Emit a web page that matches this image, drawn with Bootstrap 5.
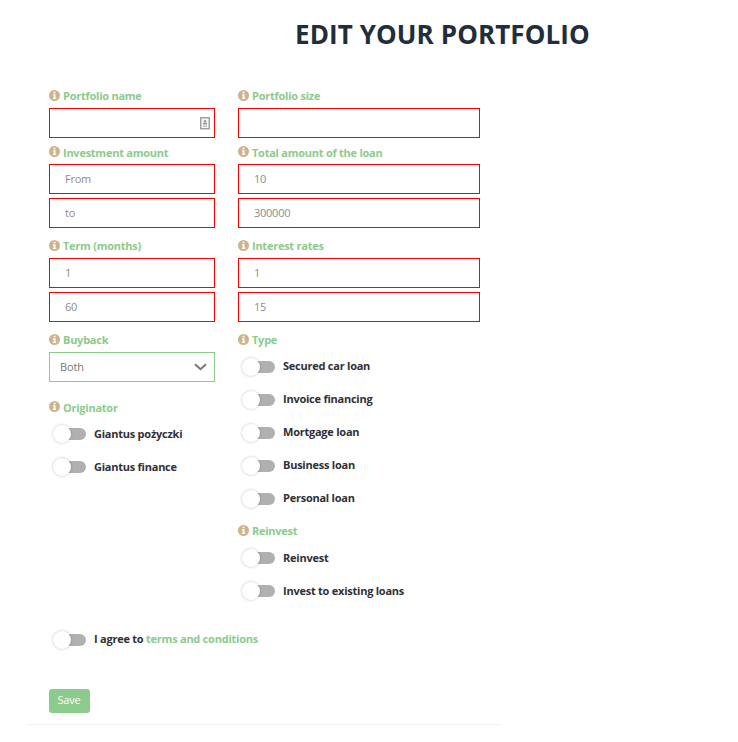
<!DOCTYPE html>
<html lang="en">
<head>
<meta charset="utf-8">
<title>Edit your portfolio</title>
<meta name="viewport" content="width=device-width, initial-scale=1">
<link rel="stylesheet" href="https://cdn.jsdelivr.net/npm/bootstrap@5.3.0/dist/css/bootstrap.min.css">
<style>
body{font-family:"Open Sans",sans-serif;font-size:11px;line-height:16px;color:#2f2f35;background:#fff;overflow:hidden}
.page-title{font-size:26px;line-height:36px;font-weight:700;letter-spacing:.1px;color:#212d3b;padding:16px 0 0 295px;height:82px}
.panel{width:476px;height:643px;margin-left:26px;padding:0 22px 0 23px;border-bottom:1px solid #f0f0f0;border-radius:3px}
.col-a{width:166px}
.col-b{width:242px}
.form-cols{gap:23px;height:541px}
.panel-inner{width:431px}
.tag{color:#8bcb8b;font-weight:700;letter-spacing:-.25px;height:30px;padding-bottom:4px}
.tag svg{width:11px;height:11px;margin:0 3px 3px 0;flex:none}
.tag-first{height:26px}
.tag-tight{height:26px;padding-bottom:3px}
.tag-tight svg{margin-bottom:4px}
.tag-type{height:28px;padding-bottom:2px;margin-bottom:0}
.tag-orig{height:35px;padding-bottom:1px}
.tag-orig svg{margin-bottom:4px}
.tag-reinv{height:26px;padding-bottom:2px}
.field{height:30px;border:1px solid #f00;border-radius:0;font-size:11px;line-height:16px;padding:5px 15px 7px;color:#8c8c8c;letter-spacing:-.25px}
.field::placeholder{color:#8c8c8c;opacity:1}
.field + .field{margin-top:4px}
.field-icon{right:5px;top:9px;width:10px;height:13px}
.picker{height:30px;border:1px solid #8bcb8b;padding:0 7px 0 10px;color:#777;letter-spacing:-.1px}
.switch-row{height:33px;font-weight:700;padding-left:3px;letter-spacing:-.24px}
.track{width:30px;height:12px;margin:1px 8px 0 4px;border-radius:0 6px 6px 0;background:#b0b0b0;flex:none}
.knob{width:18px;height:18px;margin:-3px 0 0 -3px;border-radius:50%;background:#fff;box-shadow:0 0 3px rgba(0,0,0,.25)}
.switch-text{padding-bottom:1px}
.low .switch-text{padding:1px 0 0}
.terms{color:#8bcb8b}
.save{width:41px;height:24px;margin-top:33px;background:#8bcb8b;color:#fff;font-size:11px;line-height:16px;border:0;border-radius:3px;padding:3px 1px 5px 0;letter-spacing:-.2px}
</style>
</head>
<body>
<svg class="d-none"><symbol id="info" viewBox="0 0 11 11"><circle cx="5.5" cy="5.5" r="5.5" fill="#ceb38c"/><path d="M4.6 1.7h1.9v1.6H4.6zM4 4.3h2.5v3.4h.7v1.2H3.9V7.7h.8V5.5H4z" fill="#fff"/></symbol></svg>
<h1 class="page-title m-0">EDIT YOUR PORTFOLIO</h1>
<main class="panel">
<form class="panel-inner">
<div class="form-cols d-flex">
<section class="col-a">
<div class="tag tag-first d-flex align-items-end"><svg><use href="#info"/></svg>Portfolio name</div>
<div class="position-relative"><input class="form-control field" aria-label="Portfolio name">
<svg class="field-icon position-absolute" viewBox="0 0 10 13"><rect x=".75" y=".75" width="8.5" height="11" fill="#f5f5f5" stroke="#969696" stroke-width="1.3"/><circle cx="5" cy="4.2" r="1.2" fill="#999"/><path d="M3 7.5V6.3q2-1.4 4 0v1.2z" fill="#999"/><path d="M3 9.2h4" stroke="#aaa"/></svg></div>
<div class="tag tag-tight d-flex align-items-end"><svg><use href="#info"/></svg>Investment amount</div>
<input class="form-control field" placeholder="From"><input class="form-control field" placeholder="to">
<div class="tag d-flex align-items-end"><svg><use href="#info"/></svg>Term (months)</div>
<input class="form-control field" placeholder="1"><input class="form-control field" placeholder="60">
<div class="tag d-flex align-items-end"><svg><use href="#info"/></svg>Buyback</div>
<div class="picker d-flex align-items-center justify-content-between" role="button"><span>Both</span><svg width="13" height="8" viewBox="0 0 13 8"><path d="M1 1.2 6.5 6.2 12 1.2" fill="none" stroke="#777" stroke-width="2"/></svg></div>
<div class="tag tag-orig d-flex align-items-end"><svg><use href="#info"/></svg>Originator</div>
<label class="switch-row low d-flex align-items-center"><span class="track"><span class="knob d-block"></span></span><span class="switch-text">Giantus pożyczki</span></label>
<label class="switch-row low d-flex align-items-center"><span class="track"><span class="knob d-block"></span></span><span class="switch-text">Giantus finance</span></label>
</section>
<section class="col-b">
<div class="tag tag-first d-flex align-items-end"><svg><use href="#info"/></svg>Portfolio size</div>
<input class="form-control field" aria-label="Portfolio size">
<div class="tag tag-tight d-flex align-items-end"><svg><use href="#info"/></svg>Total amount of the loan</div>
<input class="form-control field" placeholder="10"><input class="form-control field" placeholder="300000">
<div class="tag d-flex align-items-end"><svg><use href="#info"/></svg>Interest rates</div>
<input class="form-control field" placeholder="1"><input class="form-control field" placeholder="15">
<div class="tag tag-type d-flex align-items-end"><svg><use href="#info"/></svg>Type</div>
<label class="switch-row d-flex align-items-center"><span class="track"><span class="knob d-block"></span></span><span class="switch-text">Secured car loan</span></label>
<label class="switch-row d-flex align-items-center"><span class="track"><span class="knob d-block"></span></span><span class="switch-text">Invoice financing</span></label>
<label class="switch-row d-flex align-items-center"><span class="track"><span class="knob d-block"></span></span><span class="switch-text">Mortgage loan</span></label>
<label class="switch-row d-flex align-items-center"><span class="track"><span class="knob d-block"></span></span><span class="switch-text">Business loan</span></label>
<label class="switch-row d-flex align-items-center"><span class="track"><span class="knob d-block"></span></span><span class="switch-text">Personal loan</span></label>
<div class="tag tag-reinv d-flex align-items-end"><svg><use href="#info"/></svg>Reinvest</div>
<label class="switch-row low d-flex align-items-center"><span class="track"><span class="knob d-block"></span></span><span class="switch-text">Reinvest</span></label>
<label class="switch-row low d-flex align-items-center"><span class="track"><span class="knob d-block"></span></span><span class="switch-text">Invest to existing loans</span></label>
</section>
</div>
<label class="switch-row d-flex align-items-center"><span class="track"><span class="knob d-block"></span></span><span class="switch-text">I agree to <a class="terms text-decoration-none" href="#">terms and conditions</a></span></label>
<button type="button" class="btn save d-block">Save</button>
</form>
</main>
<script src="https://cdn.jsdelivr.net/npm/bootstrap@5.3.0/dist/js/bootstrap.bundle.min.js"></script>
</body>
</html>
